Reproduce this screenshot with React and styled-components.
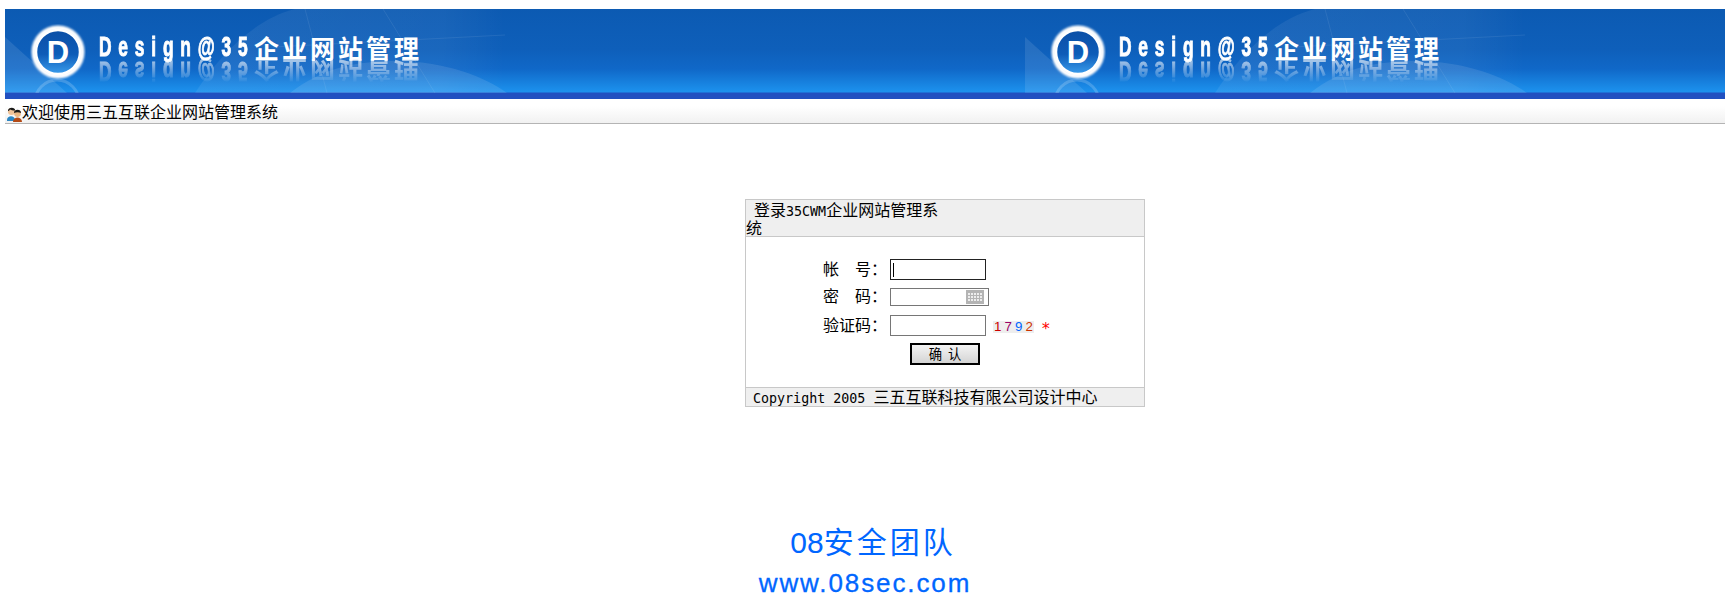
import React from "react";
import styled, { createGlobalStyle } from "styled-components";

const CJK = '"Noto Sans CJK SC", sans-serif';
const MONO = '"DejaVu Sans Mono", "Noto Sans CJK SC", monospace';

const GlobalStyle = createGlobalStyle`
  html, body {
    margin: 0;
    padding: 0;
    background: #fff;
    overflow: hidden;
  }
  body {
    padding: 9px 0 0 5px;
    font-family: ${CJK};
    color: #000;
  }
`;

const Banner = styled.div`
  display: flex;
  height: 90px;
  overflow: hidden;
`;

const Tile = styled.div`
  position: relative;
  flex: 0 0 1020px;
  height: 90px;
  overflow: hidden;
  background: linear-gradient(#0c5ab2 0, #0e5fba 40px, #1068c8 60px, #1c92ee 83px, #2150c0 84px, #2150c0 90px);
`;

const Decor = styled.svg`
  position: absolute;
  left: 0;
  top: 0;
`;

const BannerContent = styled.div`
  position: relative;
  display: flex;
  align-items: flex-start;
  padding: 15px 0 0 25px;
`;

const Wordmark = styled.div`
  position: relative;
  margin: 11px 0 0 13px;
  width: 330px;
  height: 24px;
`;

const MarkLine = styled.div`
  display: flex;
  align-items: center;
  height: 24px;
  color: #fff;
  white-space: nowrap;
  ${(p) => p.$mirror && `
    position: absolute;
    left: 0;
    top: 24px;
    transform: scaleY(-1);
    opacity: .6;
    mask-image: linear-gradient(transparent 0, #000 90%);
  `}
`;

const MarkLatinBox = styled.div`
  flex: none;
  width: 155px;
  height: 24px;
`;

const MarkLatin = styled.span`
  display: inline-block;
  transform: scaleX(.62);
  transform-origin: left center;
  font-family: "Liberation Sans", sans-serif;
  font-weight: 700;
  font-size: 28px;
  line-height: 24px;
  letter-spacing: 11px;
  -webkit-text-stroke: 1px #fff;
`;

const MarkCjk = styled.span`
  font-family: ${CJK};
  font-weight: 700;
  font-size: 25px;
  letter-spacing: 3px;
`;

const TitleBar = styled.div`
  display: flex;
  align-items: center;
  height: 24px;
  border-bottom: 1px solid #b4b4b4;
  background: linear-gradient(#fff 30%, #f1f1f1);
  font-size: 16px;
  line-height: 24px;
  padding-left: 2px;
`;

const Panel = styled.div`
  width: 398px;
  margin: 75px 0 0 740px;
  border: 1px solid #c8c8c8;
  font-size: 16px;
`;

const HeadStrip = styled.div`
  box-sizing: content-box;
  height: 36px;
  background: #efefef;
  border-bottom: 1px solid #c8c8c8;
`;

const PanelHead = styled.div`
  width: 196px;
  font-size: 16px;
  line-height: 18px;
  text-indent: 8px;
  word-break: break-all;
`;

const Small = styled.span`
  font-family: ${MONO};
  font-size: 13.33px;
  line-height: 1;
`;

const Form = styled.div`
  display: flex;
  flex-direction: column;
  height: 150px;
  padding-top: 22px;
  box-sizing: border-box;
`;

const Row = styled.div`
  display: flex;
  align-items: center;
  height: ${(p) => p.$h}px;
  margin-bottom: ${(p) => p.$gap || 0}px;
`;

const Label = styled.div`
  width: 67px;
  margin-left: 77px;
  padding-bottom: 4px;
  font-size: 16px;
  line-height: 20px;
  white-space: pre;
`;

const Field = styled.div`
  position: relative;
  box-sizing: border-box;
  width: ${(p) => p.$w}px;
  height: ${(p) => p.$h}px;
  border: 1px solid ${(p) => (p.$focus ? "#222" : "#767676")};
  background: #fff;
`;

const Caret = styled.i`
  position: absolute;
  left: 2px;
  top: 3px;
  width: 1px;
  height: 14px;
  background: #000;
`;

const KeyIcon = styled.svg`
  position: absolute;
  right: 4px;
  top: 1px;
`;

const Captcha = styled.div`
  display: flex;
  justify-content: space-between;
  width: 41px;
  height: 12px;
  margin: 2px 0 0 7px;
  padding: 0 1px;
  box-sizing: border-box;
  background: #eeeeee;
  font-family: "Liberation Sans", sans-serif;
  font-size: 13.33px;
  line-height: 12px;
`;

const Digit = styled.span`
  color: ${(p) => p.$c};
`;

const Star = styled.span`
  margin: 7px 0 0 7px;
  color: #f00;
  font-family: ${MONO};
  font-size: 16px;
  line-height: 12px;
`;

const SubmitRow = styled.div`
  display: flex;
  padding-left: 164px;
  margin-top: 7px;
`;

const Submit = styled.button`
  box-sizing: border-box;
  width: 70px;
  height: 22px;
  padding: 0;
  border: 2px solid #000;
  border-radius: 0;
  background: linear-gradient(#f4f4f4, #d4d4d4);
  font-family: ${CJK};
  font-size: 13.33px;
  line-height: 18px;
  color: #000;
  white-space: pre;
`;

const PanelFoot = styled.div`
  height: 18px;
  border-top: 1px solid #c8c8c8;
  background: #efefef;
  padding-left: 7px;
  font-size: 16px;
  line-height: 17px;
  white-space: pre;
`;

const Credit = styled.div`
  margin-top: 115px;
  text-align: center;
  color: #0066ff;
  white-space: nowrap;
`;

const CreditName = styled.div`
  margin-left: 16px;
  font-size: 30px;
  line-height: 42px;
  font-family: "Liberation Sans", "Noto Sans CJK SC", sans-serif;
`;

const CreditCjk = styled.span`
  letter-spacing: 3px;
`;

const CreditUrl = styled.div`
  font-size: 26px;
  line-height: 38px;
  letter-spacing: 1.9px;
  font-family: "Liberation Sans", sans-serif;
  -webkit-text-stroke: .3px #0066ff;
`;

function BannerDecor() {
  return (
    <Decor width="1020" height="84" viewBox="0 0 1020 84">
      <defs>
        <linearGradient id="fade" x1="0" x2="1" y1="0" y2="0">
          <stop offset="0" stopColor="#fff" stopOpacity=".07" />
          <stop offset=".8" stopColor="#fff" stopOpacity=".05" />
          <stop offset="1" stopColor="#fff" stopOpacity="0" />
        </linearGradient>
      </defs>
      <path d="M0 28 L62 84 L0 84Z" fill="#fff" opacity=".1" />
      <path d="M190 84 C215 45 250 10 290 0 L500 0 L500 84Z" fill="url(#fade)" />
      <path d="M285 84 C315 60 350 52 390 52 C440 52 480 68 502 84Z" fill="#fff" opacity=".1" />
      <path d="M300 0 L322 84 M378 0 L430 84 M268 38 L500 26" stroke="#fff" strokeOpacity=".08" fill="none" />
      <circle cx="52" cy="93" r="22" fill="none" stroke="#fff" strokeOpacity=".18" strokeWidth="3" />
    </Decor>
  );
}

function Logo() {
  return (
    <svg width="56" height="56" viewBox="0 0 56 56">
      <defs>
        <linearGradient id="glass" x1="0" x2="0" y1="0" y2="1">
          <stop offset="0" stopColor="#0b4fa6" />
          <stop offset=".55" stopColor="#0d5cb8" />
          <stop offset="1" stopColor="#3a9cec" />
        </linearGradient>
        <filter id="glow" x="-20%" y="-20%" width="140%" height="140%">
          <feGaussianBlur stdDeviation="1.2" />
        </filter>
      </defs>
      <circle cx="28" cy="28" r="24" fill="none" stroke="#fff" strokeWidth="5" filter="url(#glow)" />
      <circle cx="28" cy="28" r="22" fill="url(#glass)" stroke="#fff" strokeWidth="2.5" />
      <text x="28" y="39" textAnchor="middle" fill="#fff" fontFamily="Liberation Sans" fontWeight="700" fontSize="31">D</text>
    </svg>
  );
}

function BannerTile() {
  return (
    <Tile>
      <BannerDecor />
      <BannerContent>
        <Logo />
        <Wordmark>
          <MarkLine>
            <MarkLatinBox><MarkLatin>Design@35</MarkLatin></MarkLatinBox>
            <MarkCjk>企业网站管理</MarkCjk>
          </MarkLine>
          <MarkLine $mirror aria-hidden="true">
            <MarkLatinBox><MarkLatin>Design@35</MarkLatin></MarkLatinBox>
            <MarkCjk>企业网站管理</MarkCjk>
          </MarkLine>
        </Wordmark>
      </BannerContent>
    </Tile>
  );
}

function UsersIcon() {
  return (
    <svg width="15" height="16" viewBox="0 0 15 16" style={{ flex: "none", marginTop: 5 }}>
      <path d="M0 14 C0 9 8 9 8 14 L8 15 L0 15Z" fill="#2b86c4" />
      <circle cx="4.5" cy="5.5" r="3.6" fill="#f0c49a" />
      <path d="M1 5 C0.8 0.8 8.2 0.6 8.2 4.6 C6 4.6 3.6 3.8 3 3.4 C2.6 4.2 2 4.8 1 5Z" fill="#1a1a1a" />
      <path d="M6 16 C6 10 15 10 15 16Z" fill="#b44a16" />
      <circle cx="10.5" cy="7.5" r="3.4" fill="#eab884" />
      <path d="M7 7 C6.8 2.8 14.2 2.8 14 7 C12 6 9 6 7 7Z" fill="#1a1a1a" />
    </svg>
  );
}

function KeyboardIcon() {
  return (
    <KeyIcon width="18" height="14" viewBox="0 0 18 14">
      <rect width="18" height="14" fill="#b4b4b4" />
      <path d="M2 4h14M2 7h14M2 10h14" stroke="#fff" strokeWidth="1.6" strokeDasharray="2 1" />
    </KeyIcon>
  );
}

export default function App() {
  return (
    <>
      <GlobalStyle />
      <Banner>
        <BannerTile />
        <BannerTile />
      </Banner>
      <TitleBar>
        <UsersIcon />
        欢迎使用三五互联企业网站管理系统
      </TitleBar>
      <Panel>
        <HeadStrip>
          <PanelHead>
            登录<Small>35CWM</Small>企业网站管理系统
          </PanelHead>
        </HeadStrip>
        <Form>
          <Row $h={21} $gap={8}>
            <Label>帐　号：</Label>
            <Field $w={96} $h={21} $focus>
              <Caret />
            </Field>
          </Row>
          <Row $h={18} $gap={9}>
            <Label>密　码：</Label>
            <Field $w={99} $h={18}>
              <KeyboardIcon />
            </Field>
          </Row>
          <Row $h={21}>
            <Label>验证码：</Label>
            <Field $w={96} $h={21} />
            <Captcha>
              <Digit $c="#cc0000">1</Digit>
              <Digit $c="#990066">7</Digit>
              <Digit $c="#0066ff">9</Digit>
              <Digit $c="#cc3300">2</Digit>
            </Captcha>
            <Star>*</Star>
          </Row>
          <SubmitRow>
            <Submit>确  认</Submit>
          </SubmitRow>
        </Form>
        <PanelFoot>
          <Small>Copyright 2005 </Small>三五互联科技有限公司设计中心
        </PanelFoot>
      </Panel>
      <Credit>
        <CreditName>08<CreditCjk>安全团队</CreditCjk></CreditName>
        <CreditUrl>www.08sec.com</CreditUrl>
      </Credit>
    </>
  );
}
